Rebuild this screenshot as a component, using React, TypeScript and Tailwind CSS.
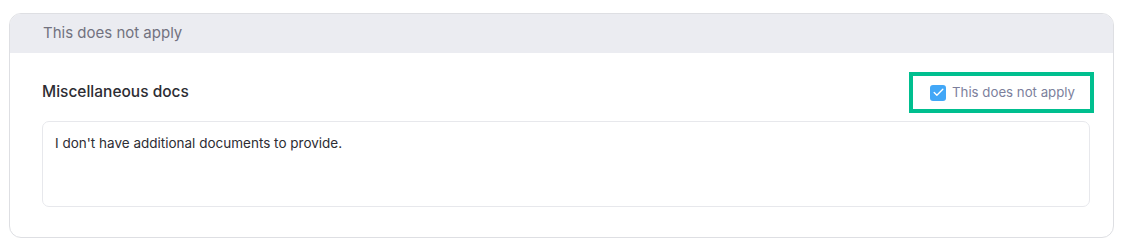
import { Check } from 'lucide-react';

export default function App() {
  return (
    <div className="w-[1123px] h-[248px] bg-white pt-[13px] pl-[9px] font-['Inter','Liberation_Sans',sans-serif]">
      <div className="w-[1105px] h-[225px] border border-[#dedfe3] rounded-[12px] overflow-hidden bg-white flex flex-col">
        <div className="h-[39px] bg-[#ebecf1] flex items-center pl-[33px] text-[15px] text-[#72727f]">
          This does not apply
        </div>
        <div className="flex-1 pl-[32px] pr-[23px] pt-[23px]">
          <div className="flex items-center justify-between">
            <h3 className="text-[15.5px] font-medium text-[#2d2d33] -mt-[1px]">Miscellaneous docs</h3>
            <label className="h-[33px] w-[177px] flex items-center gap-[6px] pl-[17px] outline-[4px] outline-solid outline-[#00bf8f]">
              <span className="w-4 h-4 rounded-[3px] bg-[#42a7f7] flex items-center justify-center">
                <Check size={13} strokeWidth={2.5} className="text-white" />
              </span>
              <span className="text-[13.25px] text-[#7c7f9c]">This does not apply</span>
            </label>
          </div>
          <div className="mt-[12px] h-[86px] border border-[#e7e8ec] rounded-[7px] px-[12px] pt-[11px] text-[13.5px] text-[#2d2d33]">
            I don't have additional documents to provide.
          </div>
        </div>
      </div>
    </div>
  );
}
